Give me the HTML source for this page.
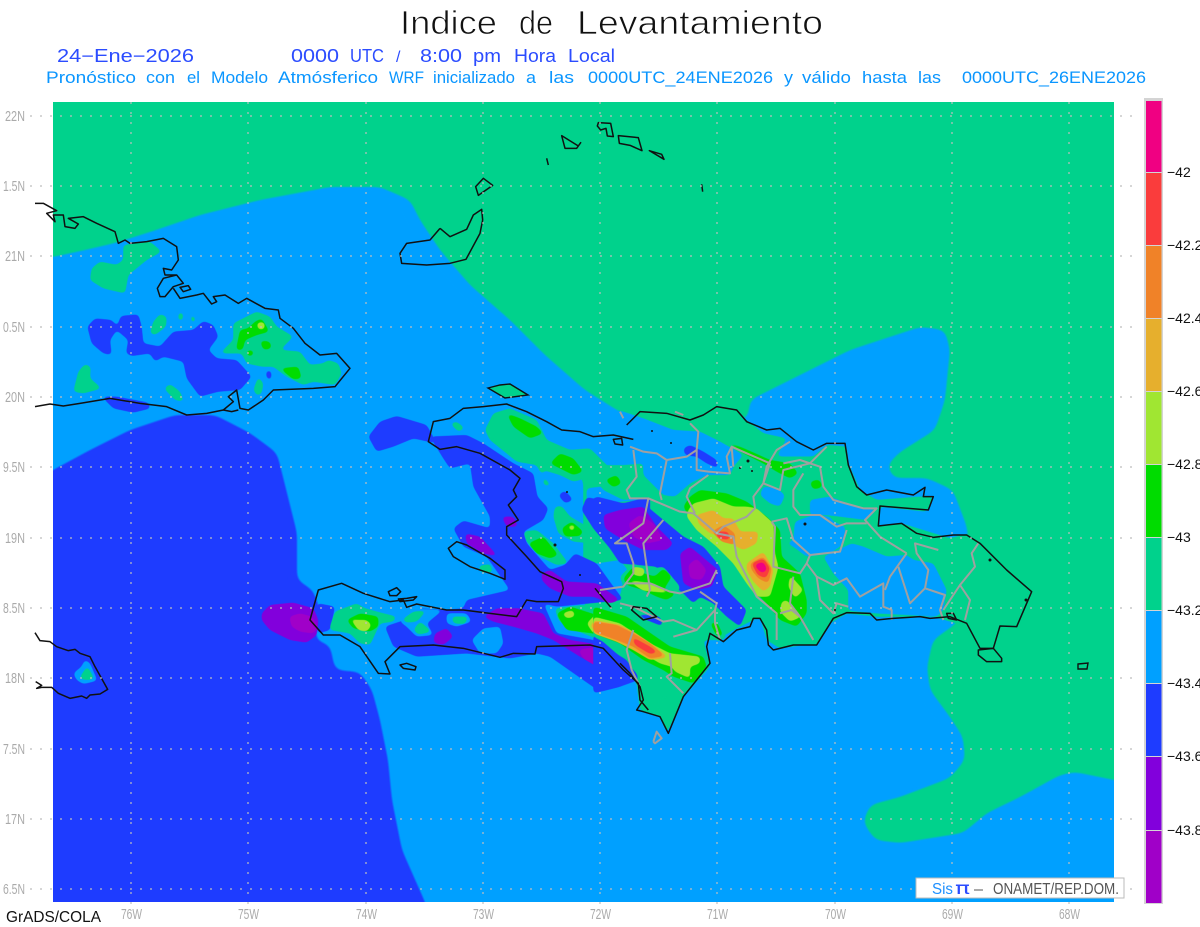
<!DOCTYPE html>
<html><head><meta charset="utf-8"><title>Indice de Levantamiento</title>
<style>
html,body{margin:0;padding:0;background:#fff;width:1200px;height:927px;overflow:hidden}
svg{display:block}
text{font-family:"Liberation Sans",sans-serif}
.s{fill:#00d28c}.b{fill:#00a0ff}.d{fill:#1e3cff}.p{fill:#8200dc}.m{fill:#a000c8}.g{fill:#00dc00}.l{fill:#a0e632}.y{fill:#e6af2d}.o{fill:#f08228}.r{fill:#fa3c3c}.k{fill:#f00082}
.c{fill:none;stroke:#111;stroke-width:4.5;stroke-linejoin:round}
.v{fill:none;stroke:#a0a0a0;stroke-width:6;stroke-linejoin:round}
.lab{fill:#aaa;font-size:14.5px}
.bar{fill:#111;font-size:14px}
.z polygon{filter:url(#f3)}
.big{filter:url(#f1)}
.t2{fill:#2b4cff;font-size:18px}
.t3{fill:#0a96ff;font-size:16.5px}
</style></head><body>
<svg width="1200" height="927" viewBox="0 0 1200 927" xmlns="http://www.w3.org/2000/svg">
<defs>
<clipPath id="mc"><rect x="53" y="102" width="1061" height="800"/></clipPath>
<filter id="f1" color-interpolation-filters="sRGB" x="-5%" y="-5%" width="110%" height="110%"><feGaussianBlur stdDeviation="5"/><feComponentTransfer><feFuncA type="linear" slope="6" intercept="-2.5"/></feComponentTransfer></filter>
<filter id="f3" color-interpolation-filters="sRGB" x="-40%" y="-40%" width="180%" height="180%"><feGaussianBlur stdDeviation="6"/><feComponentTransfer><feFuncA type="linear" slope="6" intercept="-2.4"/></feComponentTransfer></filter>
</defs>
<rect width="1200" height="927" fill="#fff"/>
<g clip-path="url(#mc)">
<rect x="53" y="102" width="1061" height="800" class="s"/>
<polygon class="b big" points="30,259 53,257 85,250 115,243 150,232 200,215 260,200 330,187 380,187 410,200 420,220 440,250 470,285 510,320 545,355 585,390 620,412 660,425 700,430 748,418 750,400 790,380 850,350 920,327 945,330 950,350 945,400 935,430 900,452 887,465 893,478 927,478 953,490 967,527 970,560 965,600 957,623 933,640 927,667 930,690 950,717 963,737 965,760 950,778 900,797 870,805 863,822 875,840 900,843 963,833 987,813 1020,797 1060,775 1075,772 1114,780 1140,785 1140,930 30,930"/>
<polygon class="d big" points="30,485 53,470 90,450 130,430 175,415 215,415 250,433 277,453 287,493 297,533 297,580 313,590 320,610 315,640 330,645 335,670 360,672 372,690 380,720 388,760 392,800 402,850 425,902 435,930 30,930"/>

<!-- Cuba -->
<g class="z" transform="translate(0,180) scale(.33333)">
<polygon class="s" points="370,195 450,185 485,215 440,240 385,285 375,340 310,325 270,300 275,265 300,245 350,255 370,240"/>
<polygon class="s" points="450,460 460,425 480,402 500,410 498,440 465,465"/>
<polygon class="s" points="535,398 550,398 548,422 535,422"/>
<polygon class="s" points="570,410 580,405 588,420 578,432"/>
<polygon class="s" points="660,520 700,480 700,430 770,395 810,410 830,440 880,470 840,510 900,515 930,555 970,550 985,540 1015,550 1025,580 1005,615 940,605 910,615 860,590 820,560 785,560 740,550 725,520"/>
<polygon class="s" points="220,635 235,575 255,552 272,560 270,595 305,625 250,640"/>
<polygon class="s" points="492,625 510,612 540,635 552,665 525,660"/>
<polygon class="s" points="760,630 775,590 790,610 785,640 772,648"/>
<polygon class="g" points="708,510 720,450 745,445 765,425 785,415 808,455 770,465 735,480 728,510"/>
<polygon class="g" points="840,565 895,560 905,595 880,598"/>
<polygon class="g" points="780,482 810,485 815,505 790,510"/>
<polygon class="g" points="740,510 762,512 758,528 742,528"/>
<polygon class="l" points="770,428 794,426 794,448 774,448"/>
<polygon class="d" points="262,440 285,415 335,420 352,440 362,408 415,403 425,440 430,490 480,500 520,455 580,450 610,423 640,435 655,470 625,510 650,535 710,540 755,590 720,630 655,635 600,650 560,595 550,545 490,530 465,545 450,520 395,528 378,520 385,480 350,450 330,480 335,525 310,520 275,490"/>
<polygon class="d" points="305,650 350,650 445,668 452,685 400,698 340,685"/>
<polygon class="d" points="798,572 814,572 814,600 800,596"/>
</g>

<!-- Jamaica fill -->
<g class="z" transform="translate(0,610) scale(.33333)">
<polygon class="b" points="220,190 245,170 255,148 270,160 292,212 250,222 230,210"/>
<polygon class="s" points="238,204 262,168 284,208 255,210"/>
</g>

<!-- DR green base and blue patches -->
<g class="z" transform="translate(600,400) scale(.33333)">
<polygon class="s" points="-90,150 -90,110 0,60 60,30 300,20 440,60 490,100 560,115 530,170 640,170 680,135 740,140 745,190 780,270 830,300 960,290 1000,290 980,335 840,320 835,380 905,370 1050,415 1105,400 1140,430 1290,570 1240,690 1190,680 1180,750 1120,720 1070,670 1000,650 830,650 740,640 690,670 650,735 610,735 540,745 500,720 480,650 400,690 350,720 310,720 330,800 250,890 200,1000 180,950 120,930 110,850 60,790 0,750 -50,600 -50,250"/>
<polygon class="b" points="-120,90 0,40 60,32 130,55 220,90 300,95 360,125 430,165 400,200 390,225 320,225 270,250 225,290 190,285 130,225 130,190 70,195 0,195 -100,180"/>
<polygon class="b" points="-40,265 90,250 120,300 0,310 -40,300"/>
<polygon class="b" points="490,260 530,265 555,285 540,320 510,310 480,285"/>
<polygon class="b" points="630,300 690,290 780,325 830,330 800,360 720,350 680,345 630,345"/>
<polygon class="b" points="585,365 640,345 690,350 700,365 735,380 735,420 720,440 690,460 620,470 580,440 560,430 580,420"/>
<polygon class="b" points="670,470 735,440 755,430 790,440 860,470 920,465 940,480 1000,490 1040,570 1030,630 1010,650 830,640 745,632 745,570 700,520"/>
<polygon class="b" points="-70,500 60,480 90,520 70,540 60,590 0,600 -50,570"/>
<polygon class="d" points="250,145 270,135 310,155 350,180 355,205 320,190 290,170 255,165"/>
<polygon class="g" points="365,120 420,140 510,180 570,190 595,220 570,235 530,215 490,190 430,160"/>
<polygon class="g" points="10,235 40,220 65,240 45,265 15,250"/>
<polygon class="g" points="630,245 658,238 668,262 638,268"/>
</g>

<!-- Haiti -->
<g class="z" transform="translate(250,400) scale(.33333)">
<polygon class="s" points="600,70 620,65 645,85 625,95"/>
<polygon class="s" points="705,90 730,40 780,25 860,60 890,120 960,150 1020,145 1090,215 1140,250 1200,240 1200,290 1120,300 1060,270 1030,230 970,245 930,225 880,210 880,255 905,260 870,215 860,195 800,185 770,160 720,120"/>
<polygon class="d" points="355,110 390,65 440,48 530,75 560,130 490,115 430,140 380,155"/>
<polygon class="d" points="540,110 650,105 700,130 790,190 850,220 862,290 895,325 880,360 820,395 830,430 900,510 945,495 975,460 1040,490 1090,560 1120,600 920,620 880,610 920,700 1030,720 1130,780 1160,830 1110,860 1050,875 1000,840 900,770 860,760 780,775 650,760 500,770 430,740 405,680 450,665 500,650 510,625 580,630 640,625 650,600 780,570 710,470 640,440 610,385 640,362 720,385 720,350 670,260 660,190 600,205 580,175"/>
<polygon class="d" points="995,320 1040,290 1120,310 1200,290 1200,470 1170,460 1100,430 1060,370 1010,350"/>
<polygon class="d" points="925,285 945,272 970,300 945,310"/>
<polygon class="b" points="590,640 650,640 665,665 620,680 590,670"/>
<polygon class="s" points="605,650 655,650 645,672 610,670"/>
<polygon class="b" points="665,720 700,685 750,680 760,730 740,760 690,760"/>
<polygon class="b" points="465,625 580,630 560,645 530,670 550,705 500,710 470,680 450,665"/>
<polygon class="s" points="455,660 490,635 530,632 500,665 470,668"/>
<polygon class="s" points="490,690 510,664 545,695 505,704"/>
<polygon class="d" points="185,640 205,610 255,620 240,690 205,700"/>
<polygon class="s" points="240,680 255,635 320,610 345,625 400,640 440,650 430,665 390,670 360,735 330,730 300,700 240,690"/>
<polygon class="g" points="290,660 330,640 385,650 385,680 360,695 310,685"/>
<polygon class="l" points="300,655 320,660 350,660 365,675 350,695 325,690"/>
<polygon class="p" points="35,640 60,615 130,608 190,625 205,660 200,705 170,728 120,720 60,690 35,660"/>
<polygon class="m" points="118,650 150,640 185,650 205,680 190,700 150,695 125,680"/>
<polygon class="p" points="645,400 690,410 745,470 700,460 650,430"/>
<polygon class="p" points="755,350 790,350 805,380 770,380"/>
<polygon class="p" points="700,650 740,625 810,625 830,630 880,640 910,700 960,720 1050,735 1110,790 1130,810 1060,810 990,770 910,720 860,700 790,680 730,665"/>
<polygon class="m" points="985,750 1040,740 1090,775 1110,800 1060,810 1000,775"/>
<polygon class="p" points="555,700 590,684 610,710 580,735 550,728"/>
<polygon class="p" points="875,520 900,510 950,545 1040,550 1110,600 1080,610 1030,590 960,590 900,565 875,540"/>
<polygon class="s" points="685,498 722,492 728,518 692,518"/>
<polygon class="s" points="915,320 935,318 960,350 1030,390 1030,430 970,425 925,400 910,350"/>
<polygon class="s" points="820,395 860,390 910,430 955,490 920,495 870,470 830,425"/>
<polygon class="g" points="770,40 810,55 860,80 880,100 840,115 790,80"/>
<polygon class="g" points="900,190 930,160 970,175 1000,215 970,225"/>
<polygon class="g" points="1065,240 1100,225 1115,250 1090,262"/>
<polygon class="g" points="935,385 965,365 1000,395 990,408 945,410"/>
<polygon class="l" points="950,378 978,374 968,396"/>
<polygon class="g" points="835,430 880,410 925,465 900,475 860,460"/>
<polygon class="s" points="915,625 1000,615 1100,640 1200,690 1200,770 1160,800 1100,740 1000,700 950,680 925,660"/>
<polygon class="g" points="920,640 960,620 1040,645 1200,730 1200,790 1100,735 1030,700 950,690 930,660"/>
<polygon class="l" points="935,640 970,630 975,650 950,655"/>
<polygon class="l" points="1010,670 1040,640 1100,665 1200,730 1200,770 1100,710 1030,700"/>
<polygon class="y" points="1020,680 1045,645 1100,675 1200,735 1200,765 1120,715 1050,700"/>
<polygon class="o" points="1030,680 1050,650 1100,680 1200,740 1200,760 1130,720 1060,695"/>
<polygon class="r" points="1035,682 1060,662 1098,685 1070,702"/>
<polygon class="k" points="1040,682 1065,668 1090,685 1065,698"/>
</g>

<!-- DR central -->
<g class="z" transform="translate(600,400) scale(.33333)">
<polygon class="d" points="-40,291 60,315 130,310 190,360 250,410 310,440 360,500 370,560 440,630 420,680 380,650 340,610 300,590 280,610 240,570 230,570 170,500 60,490 30,445 -20,385 -55,330"/>
<polygon class="d" points="100,640 180,650 190,680 140,660"/>
<polygon class="d" points="-20,700 60,770 110,820 115,840 60,860 -20,880"/>
<polygon class="p" points="10,345 60,330 130,320 170,380 220,430 200,450 130,450 70,420 15,385"/>
<polygon class="p" points="240,460 270,440 330,490 355,510 335,560 290,570 250,550"/>
<polygon class="m" points="85,370 120,345 160,370 190,420 140,430 100,410"/>
<polygon class="m" points="265,495 290,475 320,510 305,540 270,535"/>
<polygon class="s" points="60,530 100,490 140,510 190,500 240,560 230,590 190,610 130,570 70,560"/>
<polygon class="g" points="100,500 130,520 165,530 190,505 215,530 190,570 230,580 200,600 170,590 130,570 80,555 70,535"/>
<polygon class="l" points="95,500 135,505 130,530 100,525"/>
<polygon class="l" points="80,540 160,550 215,580 130,572"/>
<polygon class="s" points="-20,610 90,640 210,735 310,760 335,790 260,880 180,900 130,900 125,830 100,770 -20,710"/>
<polygon class="s" points="140,830 190,820 270,850 240,885 190,895 190,940 130,900"/>
<polygon class="s" points="305,655 352,650 380,712 350,725"/>
<polygon class="g" points="330,668 352,668 370,708 350,708"/>
<polygon class="g" points="-20,620 80,650 210,740 310,770 320,800 280,850 220,830 190,810 130,780 60,730 -20,700"/>
<polygon class="l" points="-20,650 60,670 140,725 210,760 300,770 300,790 270,800 270,835 225,815 215,800 180,790 130,760 70,720 -20,700"/>
<polygon class="y" points="-20,660 60,675 100,695 160,735 205,772 150,780 100,750 50,725 -20,700"/>
<polygon class="o" points="-20,665 50,675 100,700 150,730 195,768 150,775 100,740 50,720 -20,695"/>
<polygon class="r" points="95,710 150,740 175,758 150,762 105,735"/>
<polygon class="g" points="270,290 300,270 380,280 440,305 500,350 540,390 545,470 600,520 620,600 620,640 590,680 540,660 500,610 450,560 410,500 360,440 280,370 250,320"/>
<polygon class="l" points="265,330 280,310 340,295 400,320 440,320 470,325 520,370 525,460 535,500 530,520 510,590 470,590 440,550 400,490 350,440 290,390 260,350"/>
<polygon class="l" points="570,525 610,570 585,595 565,560"/>
<polygon class="l" points="545,605 560,600 605,650 570,665 540,635"/>
<polygon class="y" points="290,345 340,330 370,355 400,355 420,395 475,395 470,430 430,450 410,440 370,410 330,400 295,370"/>
<polygon class="y" points="440,490 490,455 520,510 510,560 490,575 460,545 440,510"/>
<polygon class="o" points="335,395 370,375 405,400 405,435 365,425"/>
<polygon class="o" points="450,490 490,470 515,505 505,550 475,535 455,510"/>
<polygon class="r" points="455,490 490,475 510,505 498,535 473,525"/>
<polygon class="k" points="462,495 490,485 502,510 485,520"/>
<polygon class="r" points="345,395 385,395 390,420 355,415"/>
</g>
</g>

<!-- Provincial lines -->
<g transform="translate(600,400) scale(.33333)">
<polyline class="v" points="90,140 130,155 170,160 200,180 260,170 290,150 295,95 270,70"/>
<polyline class="v" points="100,150 110,230 80,270 90,295 145,295 240,335 280,340 350,400 400,410 410,470 470,590 530,640 530,720"/>
<polyline class="v" points="145,295 130,370 45,430 80,430 100,490 100,520 70,560 0,570"/>
<polyline class="v" points="200,180 180,280 185,300"/>
<polyline class="v" points="290,150 290,210 325,215 390,220 380,170 395,140 400,200"/>
<polyline class="v" points="325,225 270,265 260,290 285,340"/>
<polyline class="v" points="395,140 440,160 510,190 490,250 460,290 465,325 440,350 370,380 350,400"/>
<polyline class="v" points="570,125 530,150 500,200 490,250 540,270 550,210 630,190 680,140"/>
<polyline class="v" points="550,190 600,180 660,200 670,260 700,300 790,325 830,325 795,360 840,410 920,460"/>
<polyline class="v" points="610,220 580,270 580,320 600,345 660,345 710,380 740,370 800,370"/>
<polyline class="v" points="515,365 560,355 580,420 630,465 620,490 600,520 540,505 520,500 525,380 515,365"/>
<polyline class="v" points="630,465 720,455 740,390"/>
<polyline class="v" points="620,490 650,530 660,600 700,640 710,610 745,620"/>
<polyline class="v" points="650,530 700,555 740,535 780,590 850,550 850,620 875,630 875,660"/>
<polyline class="v" points="920,460 870,530 855,570"/>
<polyline class="v" points="895,500 930,610 975,565 985,510 950,460 945,430 1015,450"/>
<polyline class="v" points="975,565 1035,585 1020,630 1030,660"/>
<polyline class="v" points="1030,630 1080,555 1110,600 1095,660"/>
<polyline class="v" points="1080,555 1125,500 1115,460 1135,430"/>
<polyline class="v" points="580,530 570,610 600,650 640,720"/>
<polyline class="v" points="540,640 575,630 600,650"/>
<polyline class="v" points="350,510 330,550 240,580 210,575 150,550 80,550"/>
<polyline class="v" points="190,360 130,430 150,570 140,590"/>
<polyline class="v" points="300,575 350,610 345,630 290,690 220,660 190,665 100,620 60,610"/>
<polyline class="v" points="345,630 345,670 360,720"/>
<polyline class="v" points="100,690 80,750 95,810 120,860"/>
<polyline class="v" points="210,760 215,820 200,830 250,880"/>
<polyline class="v" points="220,710 290,690"/>
<polyline class="v" points="160,1025 170,995 185,1015 165,1030 160,1025"/>
<polyline class="v" points="225,35 250,45"/>
<polyline class="v" points="60,35 70,55"/>
</g>

<!-- Coasts -->
<g transform="translate(600,400) scale(.33333)">
<polyline class="c" points="80,75 120,35 200,40 270,60 310,45 350,20 410,30 440,65 500,90 540,85 590,125 640,150 680,130 735,130 745,195 770,260 800,285 860,270 940,285 975,262 970,290 1000,290 985,330 840,318 835,378 905,370 950,400 1000,412 1060,405 1100,405 1140,430 1220,510 1295,575 1250,680 1200,678 1180,745 1140,745 1100,670 1050,650 990,655 960,650 880,655 830,660 810,640 740,638 700,655 650,735 580,735 520,750 505,735 500,690 480,655 460,655 450,680 410,690 370,725 330,700 320,740 330,790 250,890 205,1000 180,950 130,935 110,930 130,900 120,860 90,820 60,790"/>
<polygon class="c" points="1135,750 1180,745 1205,775 1205,785 1160,785 1135,765"/>
<polygon class="c" points="100,620 140,625 170,650 130,660 95,630"/>
<polygon class="c" points="1040,640 1060,640 1070,660 1045,655"/>
</g>
<g transform="translate(250,400) scale(.33333)">
<polyline class="c" points="1150,118 1090,105 1030,110 990,95 935,90 890,65 830,35 770,12 700,20 640,25 600,55 550,65 535,125 570,148 620,140 690,160 780,210 810,235 790,270 800,290 775,315 805,360 770,380 770,405 830,470 870,515 935,545 940,565 925,605 860,605 830,600 800,650 720,640 640,630 590,630 500,612 470,622 460,600 420,605 340,580 275,550 205,570 180,660 220,705 270,705 330,740 385,820 420,822 405,785 450,740 550,735 640,745 750,772 790,760 855,762 860,740 1020,735 1060,745 1120,810 1165,850 1170,900 1195,930"/>
<polygon class="c" points="595,445 620,425 650,435 720,475 765,510 765,538 720,520 660,500 610,470"/>
<polygon class="c" points="415,575 440,563 452,575 440,587 420,587"/>
<polygon class="c" points="445,597 470,595 500,590 490,600 450,605"/>
<polygon class="c" points="450,795 470,790 498,800 495,810 460,805"/>
<polygon class="c" points="1090,118 1115,115 1118,135 1095,132"/>
<polyline class="c" points="1035,565 1085,625"/>
</g>
<g transform="translate(0,180) scale(.33333)">
<polyline class="c" points="105,70 130,70 170,92 140,100 165,125 160,105 190,105 195,140 225,145 235,132 205,115 250,110 290,130 345,155 355,190 375,180 390,190 440,185 490,175 530,200 535,240 515,270 490,265 495,285 530,285 550,310 520,320 495,350 480,350 472,325 490,295 530,285"/>
<polyline class="c" points="520,325 540,355 590,345 610,340 635,372 650,365 640,350 675,345 715,370 740,355 795,385 835,390 840,415 880,445 915,490 960,525 1010,520 1050,565 1005,620 940,625 820,630 790,660 745,690 720,685 710,630 685,650 700,665 670,690 695,695 715,690"/>
<polyline class="c" points="670,690 620,700 560,705 500,680 420,670 330,655 240,670 190,678 150,672 105,680"/>
<polygon class="c" points="540,322 565,317 572,328 550,335"/>
</g>
<g transform="translate(0,610) scale(.33333)">
<polyline class="c" points="105,68 120,92 150,95 170,110 205,122 225,118 240,130 270,140 285,170 323,238 300,252 270,255 260,265 245,258 210,265 175,250 155,232 125,232 110,235 125,226 107,215"/>
</g>
<g transform="translate(440,100) scale(.33333)">
<polyline class="c" points="0,385 30,410 80,388 100,345 125,328 128,360 120,400 78,478 30,490 -40,495 -115,490 -120,460 -100,430 -30,420 0,385"/>
<polygon class="c" points="107,260 130,235 158,256 115,286"/>
<polygon class="c" points="365,107 415,138 422,128 410,145 375,145"/>
<polyline class="c" points="320,175 325,195"/>
<polygon class="c" points="475,68 512,70 520,110 502,108 498,85 482,90 472,78"/>
<polygon class="c" points="535,107 595,113 606,152 570,136 538,130"/>
<polygon class="c" points="628,152 665,163 672,178"/>
<polyline class="c" points="785,253 788,275"/>
</g>
<polygon points="488,388 500,385 510,384 528,395 505,398" class="s" stroke="#111" stroke-width="1.4"/>
<polygon points="1078,664 1088,663 1087,669 1078,669" fill="none" stroke="#111" stroke-width="1.4"/>
<g fill="#111"><circle cx="652" cy="431" r="1"/><circle cx="671" cy="443" r="1"/><circle cx="748" cy="461" r="1.5"/><circle cx="740" cy="468" r="1"/><circle cx="752" cy="471" r="1"/><circle cx="805" cy="524" r="1.5"/><circle cx="990" cy="560" r="1.5"/><circle cx="1026" cy="600" r="1.5"/><circle cx="835" cy="610" r="1"/><circle cx="567" cy="492" r="1"/><circle cx="555" cy="545" r="1.5"/><circle cx="580" cy="575" r="1"/></g>

<!-- Grid -->
<g fill="none" stroke="#bdbdbd" stroke-width="1.2" stroke-dasharray="2 8">
<path d="M30 116H1140M30 186H1140M30 256H1140M30 327H1140M30 397H1140M30 467H1140M30 538H1140M30 608H1140M30 678H1140M30 749H1140M30 819H1140M30 889H1140"/>
<path d="M131 102V905M248 102V905M366 102V905M483 102V905M600 102V905M717 102V905M835 102V905M952 102V905M1069 102V905"/>
</g>

<!-- Lat labels -->
<g class="lab">
<text x="5" y="121" textLength="20" lengthAdjust="spacingAndGlyphs">22N</text>
<text x="3" y="191" textLength="22" lengthAdjust="spacingAndGlyphs">1.5N</text>
<text x="5" y="261" textLength="20" lengthAdjust="spacingAndGlyphs">21N</text>
<text x="3" y="332" textLength="22" lengthAdjust="spacingAndGlyphs">0.5N</text>
<text x="5" y="402" textLength="20" lengthAdjust="spacingAndGlyphs">20N</text>
<text x="3" y="472" textLength="22" lengthAdjust="spacingAndGlyphs">9.5N</text>
<text x="5" y="543" textLength="20" lengthAdjust="spacingAndGlyphs">19N</text>
<text x="3" y="613" textLength="22" lengthAdjust="spacingAndGlyphs">8.5N</text>
<text x="5" y="683" textLength="20" lengthAdjust="spacingAndGlyphs">18N</text>
<text x="3" y="754" textLength="22" lengthAdjust="spacingAndGlyphs">7.5N</text>
<text x="5" y="824" textLength="20" lengthAdjust="spacingAndGlyphs">17N</text>
<text x="3" y="894" textLength="22" lengthAdjust="spacingAndGlyphs">6.5N</text>
</g>
<g class="lab">
<text x="121" y="919" textLength="21" lengthAdjust="spacingAndGlyphs">76W</text>
<text x="238" y="919" textLength="21" lengthAdjust="spacingAndGlyphs">75W</text>
<text x="356" y="919" textLength="21" lengthAdjust="spacingAndGlyphs">74W</text>
<text x="473" y="919" textLength="21" lengthAdjust="spacingAndGlyphs">73W</text>
<text x="590" y="919" textLength="21" lengthAdjust="spacingAndGlyphs">72W</text>
<text x="707" y="919" textLength="21" lengthAdjust="spacingAndGlyphs">71W</text>
<text x="825" y="919" textLength="21" lengthAdjust="spacingAndGlyphs">70W</text>
<text x="942" y="919" textLength="21" lengthAdjust="spacingAndGlyphs">69W</text>
<text x="1059" y="919" textLength="21" lengthAdjust="spacingAndGlyphs">68W</text>
</g>

<!-- Titles -->
<g fill="#111" stroke="#fff" stroke-width=".8" font-size="33">
<text x="400" y="34" textLength="97" lengthAdjust="spacingAndGlyphs">Indice</text>
<text x="519" y="34" textLength="34" lengthAdjust="spacingAndGlyphs">de</text>
<text x="577" y="34" textLength="246" lengthAdjust="spacingAndGlyphs">Levantamiento</text>
</g>
<g class="t2">
<text x="57" y="62" textLength="137" lengthAdjust="spacingAndGlyphs">24−Ene−2026</text>
<text x="291" y="62" textLength="48" lengthAdjust="spacingAndGlyphs">0000</text>
<text x="350" y="62" textLength="34" lengthAdjust="spacingAndGlyphs">UTC</text>
<text x="396" y="62" font-size="16" textLength="9" lengthAdjust="spacing">/</text>
<text x="420" y="62" textLength="42" lengthAdjust="spacingAndGlyphs">8:00</text>
<text x="473" y="62" textLength="28" lengthAdjust="spacingAndGlyphs">pm</text>
<text x="514" y="62" textLength="42" lengthAdjust="spacingAndGlyphs">Hora</text>
<text x="568" y="62" textLength="47" lengthAdjust="spacingAndGlyphs">Local</text>
</g>
<g class="t3">
<text x="46" y="83" textLength="90" lengthAdjust="spacingAndGlyphs">Pronóstico</text>
<text x="146" y="83" textLength="29" lengthAdjust="spacingAndGlyphs">con</text>
<text x="187" y="83" textLength="13" lengthAdjust="spacingAndGlyphs">el</text>
<text x="211" y="83" textLength="57" lengthAdjust="spacingAndGlyphs">Modelo</text>
<text x="278" y="83" textLength="100" lengthAdjust="spacingAndGlyphs">Atmósferico</text>
<text x="389" y="83" textLength="35" lengthAdjust="spacingAndGlyphs">WRF</text>
<text x="433" y="83" textLength="82" lengthAdjust="spacingAndGlyphs">inicializado</text>
<text x="526" y="83" textLength="10" lengthAdjust="spacingAndGlyphs">a</text>
<text x="549" y="83" textLength="25" lengthAdjust="spacingAndGlyphs">las</text>
<text x="588" y="83" textLength="185" lengthAdjust="spacingAndGlyphs">0000UTC_24ENE2026</text>
<text x="784" y="83" textLength="9" lengthAdjust="spacingAndGlyphs">y</text>
<text x="802" y="83" textLength="49" lengthAdjust="spacingAndGlyphs">válido</text>
<text x="862" y="83" textLength="45" lengthAdjust="spacingAndGlyphs">hasta</text>
<text x="918" y="83" textLength="23" lengthAdjust="spacingAndGlyphs">las</text>
<text x="962" y="83" textLength="184" lengthAdjust="spacingAndGlyphs">0000UTC_26ENE2026</text>
</g>
<text x="6" y="922" font-size="16" textLength="95" lengthAdjust="spacingAndGlyphs" fill="#111">GrADS/COLA</text>

<!-- Color bar -->
<rect x="1144" y="98" width="19" height="806" fill="#d4d4d4"/>
<rect x="1146" y="101" width="15.5" height="71" class="k"/>
<rect x="1146" y="173" width="15.5" height="72" class="r"/>
<rect x="1146" y="246" width="15.5" height="72" class="o"/>
<rect x="1146" y="319" width="15.5" height="72" class="y"/>
<rect x="1146" y="392" width="15.5" height="72" class="l"/>
<rect x="1146" y="465" width="15.5" height="72" class="g"/>
<rect x="1146" y="538" width="15.5" height="72" class="s"/>
<rect x="1146" y="611" width="15.5" height="72" class="b"/>
<rect x="1146" y="684" width="15.5" height="72" class="d"/>
<rect x="1146" y="757" width="15.5" height="73" class="p"/>
<rect x="1146" y="831" width="15.5" height="72" class="m"/>
<g class="bar">
<text x="1167" y="177">−42</text><text x="1167" y="250">−42.2</text><text x="1167" y="323">−42.4</text><text x="1167" y="396">−42.6</text><text x="1167" y="469">−42.8</text><text x="1167" y="542">−43</text><text x="1167" y="615">−43.2</text><text x="1167" y="688">−43.4</text><text x="1167" y="761">−43.6</text><text x="1167" y="835">−43.8</text>
</g>

<!-- Stamp -->
<rect x="916" y="878" width="208" height="20" fill="#fff" stroke="#bbb" stroke-width="1"/>
<text x="932" y="894" font-size="15.5" fill="#1e90ff" textLength="21" lengthAdjust="spacingAndGlyphs">Sis</text>
<text x="955" y="894" font-size="17" fill="#2b4cff" textLength="15" lengthAdjust="spacingAndGlyphs" style="font-family:'DejaVu Sans',sans-serif">π</text>
<text x="974" y="894" font-size="15" fill="#555" textLength="9" lengthAdjust="spacingAndGlyphs">–</text>
<text x="993" y="894" font-size="15.5" fill="#555" textLength="126" lengthAdjust="spacingAndGlyphs">ONAMET/REP.DOM.</text>
</svg>
</body></html>
